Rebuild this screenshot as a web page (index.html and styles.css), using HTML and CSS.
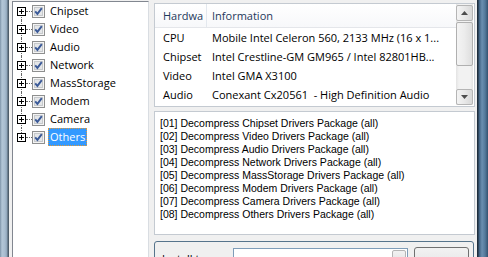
FILE: index.html
```html
<!DOCTYPE html>
<html lang="en">
<head>
    <meta charset="UTF-8">
    <title>Driver Installer</title>
    <link rel="stylesheet" href="styles.css">
</head>
<body>
    <div class="window">
        <div class="frame frame-left"></div>
        <div class="client">
            <div class="tree">
                <ul class="tree-list">
                    <li class="tree-item first"><span class="expander"></span><span class="check"><svg width="13" height="13" viewBox="0 0 13 13"><rect x="0.5" y="0.5" width="12" height="12" fill="#f4f4f4" stroke="#8e8f8f"/><rect x="2.5" y="2.5" width="8" height="8" fill="#e4e6e8" stroke="#c6c9cc"/><path d="M3.2 6.4 L5.4 8.9 L9.8 3.2" fill="none" stroke="#3b5a98" stroke-width="1.9"/></svg></span><span class="label">Chipset</span></li>
                    <li class="tree-item"><span class="expander"></span><span class="check"><svg width="13" height="13" viewBox="0 0 13 13"><rect x="0.5" y="0.5" width="12" height="12" fill="#f4f4f4" stroke="#8e8f8f"/><rect x="2.5" y="2.5" width="8" height="8" fill="#e4e6e8" stroke="#c6c9cc"/><path d="M3.2 6.4 L5.4 8.9 L9.8 3.2" fill="none" stroke="#3b5a98" stroke-width="1.9"/></svg></span><span class="label">Video</span></li>
                    <li class="tree-item"><span class="expander"></span><span class="check"><svg width="13" height="13" viewBox="0 0 13 13"><rect x="0.5" y="0.5" width="12" height="12" fill="#f4f4f4" stroke="#8e8f8f"/><rect x="2.5" y="2.5" width="8" height="8" fill="#e4e6e8" stroke="#c6c9cc"/><path d="M3.2 6.4 L5.4 8.9 L9.8 3.2" fill="none" stroke="#3b5a98" stroke-width="1.9"/></svg></span><span class="label">Audio</span></li>
                    <li class="tree-item"><span class="expander"></span><span class="check"><svg width="13" height="13" viewBox="0 0 13 13"><rect x="0.5" y="0.5" width="12" height="12" fill="#f4f4f4" stroke="#8e8f8f"/><rect x="2.5" y="2.5" width="8" height="8" fill="#e4e6e8" stroke="#c6c9cc"/><path d="M3.2 6.4 L5.4 8.9 L9.8 3.2" fill="none" stroke="#3b5a98" stroke-width="1.9"/></svg></span><span class="label">Network</span></li>
                    <li class="tree-item"><span class="expander"></span><span class="check"><svg width="13" height="13" viewBox="0 0 13 13"><rect x="0.5" y="0.5" width="12" height="12" fill="#f4f4f4" stroke="#8e8f8f"/><rect x="2.5" y="2.5" width="8" height="8" fill="#e4e6e8" stroke="#c6c9cc"/><path d="M3.2 6.4 L5.4 8.9 L9.8 3.2" fill="none" stroke="#3b5a98" stroke-width="1.9"/></svg></span><span class="label">MassStorage</span></li>
                    <li class="tree-item"><span class="expander"></span><span class="check"><svg width="13" height="13" viewBox="0 0 13 13"><rect x="0.5" y="0.5" width="12" height="12" fill="#f4f4f4" stroke="#8e8f8f"/><rect x="2.5" y="2.5" width="8" height="8" fill="#e4e6e8" stroke="#c6c9cc"/><path d="M3.2 6.4 L5.4 8.9 L9.8 3.2" fill="none" stroke="#3b5a98" stroke-width="1.9"/></svg></span><span class="label">Modem</span></li>
                    <li class="tree-item"><span class="expander"></span><span class="check"><svg width="13" height="13" viewBox="0 0 13 13"><rect x="0.5" y="0.5" width="12" height="12" fill="#f4f4f4" stroke="#8e8f8f"/><rect x="2.5" y="2.5" width="8" height="8" fill="#e4e6e8" stroke="#c6c9cc"/><path d="M3.2 6.4 L5.4 8.9 L9.8 3.2" fill="none" stroke="#3b5a98" stroke-width="1.9"/></svg></span><span class="label">Camera</span></li>
                    <li class="tree-item last"><span class="expander"></span><span class="check"><svg width="13" height="13" viewBox="0 0 13 13"><rect x="0.5" y="0.5" width="12" height="12" fill="#f4f4f4" stroke="#8e8f8f"/><rect x="2.5" y="2.5" width="8" height="8" fill="#e4e6e8" stroke="#c6c9cc"/><path d="M3.2 6.4 L5.4 8.9 L9.8 3.2" fill="none" stroke="#3b5a98" stroke-width="1.9"/></svg></span><span class="label selected">Others</span></li>
                </ul>
            </div>

            <div class="main">
                <div class="listview">
                    <div class="lv-body">
                        <div class="lv-header">
                            <div class="col col-hw">Hardwa</div>
                            <div class="col col-info">Information</div>
                        </div>
                        <div class="lv-row">
                            <div class="col col-hw">CPU</div>
                            <div class="col col-info">Mobile Intel Celeron 560, 2133 MHz (16 x 1...</div>
                        </div>
                        <div class="lv-row">
                            <div class="col col-hw">Chipset</div>
                            <div class="col col-info">Intel Crestline-GM GM965 / Intel 82801HB...</div>
                        </div>
                        <div class="lv-row">
                            <div class="col col-hw">Video</div>
                            <div class="col col-info">Intel GMA X3100</div>
                        </div>
                        <div class="lv-row">
                            <div class="col col-hw">Audio</div>
                            <div class="col col-info">Conexant Cx20561&nbsp; - High Definition Audio</div>
                        </div>
                    </div>
                    <div class="scrollbar">
                        <div class="sb-btn sb-up"><svg width="7" height="4" viewBox="0 0 7 4"><path d="M0 4 L3.5 0 L7 4 Z" fill="#4d4d4d"/></svg></div>
                        <div class="sb-thumb"></div>
                        <div class="sb-track"></div>
                        <div class="sb-btn sb-down"><svg width="7" height="4" viewBox="0 0 7 4"><path d="M0 0 L3.5 4 L7 0 Z" fill="#4d4d4d"/></svg></div>
                    </div>
                </div>

                <div class="log">
                    <div class="log-line">[01] Decompress Chipset Drivers Package (all)</div>
                    <div class="log-line">[02] Decompress Video Drivers Package (all)</div>
                    <div class="log-line">[03] Decompress Audio Drivers Package (all)</div>
                    <div class="log-line">[04] Decompress Network Drivers Package (all)</div>
                    <div class="log-line">[05] Decompress MassStorage Drivers Package (all)</div>
                    <div class="log-line">[06] Decompress Modem Drivers Package (all)</div>
                    <div class="log-line">[07] Decompress Camera Drivers Package (all)</div>
                    <div class="log-line">[08] Decompress Others Drivers Package (all)</div>
                </div>

                <div class="install">
                    <div class="install-label">Install to</div>
                    <div class="combo">
                        <span class="combo-text">C:\Drivers</span>
                        <span class="combo-btn"></span>
                    </div>
                    <div class="button">Start(S)</div>
                </div>
            </div>
        </div>
        <div class="frame frame-right"></div>
    </div>
</body>
</html>
```

FILE: styles.css
```css
body {
    margin: 0;
    width: 488px;
    height: 257px;
    overflow: hidden;
    font-family: "Open Sans", "Noto Sans", sans-serif;
    font-size: 11px;
    color: #000;
}

.window {
    display: flex;
    height: 257px;
}

.frame-left {
    width: 9px;
    background: linear-gradient(to right, #7d93a8 0, #b3c6d7 2px, #a8bccf 5px, #8ea4b9 7px, #4e5d6b 8px, #4e5d6b 9px);
}

.frame-right {
    width: 11px;
    background: linear-gradient(to right, #1f2e3d 0, #1f2e3d 1px, #3d5f7f 2px, #6b8fb0 5px, #557a9c 8px, #34526f 11px);
}

.client {
    flex: 1;
    display: flex;
    align-items: flex-start;
    background: #f0f0f0;
    padding: 1px 2px 0 3px;
}

/* tree */

.tree {
    flex-shrink: 0;
    width: 137px;
    height: 280px;
    box-sizing: border-box;
    background: #fff;
    border: 1px solid #828790;
    border-right-color: #d9dde2;
}

.tree-list {
    list-style: none;
    margin: 0;
    padding: 0;
}

.tree-item {
    position: relative;
    display: flex;
    align-items: center;
    height: 18px;
}

.tree-item::before {
    content: "";
    position: absolute;
    left: 8px;
    top: 0;
    bottom: 0;
    border-left: 1px dotted #666;
}

.tree-item.first::before {
    top: 9px;
}

.tree-item.last::before {
    bottom: 9px;
}

.expander {
    position: relative;
    z-index: 1;
    width: 9px;
    height: 9px;
    box-sizing: border-box;
    margin-left: 4px;
    border: 1px solid #000;
    background: #fff;
}

.expander::before {
    content: "";
    position: absolute;
    left: 1px;
    top: 3px;
    width: 5px;
    height: 1px;
    background: #000;
}

.expander::after {
    content: "";
    position: absolute;
    left: 3px;
    top: 1px;
    width: 1px;
    height: 5px;
    background: #000;
}

.check {
    position: relative;
    display: flex;
    margin-left: 6px;
}

.check::before {
    content: "";
    position: absolute;
    left: -6px;
    top: 6px;
    width: 6px;
    border-top: 1px dotted #666;
}

.label {
    margin-left: 3px;
    padding: 0 2px;
    line-height: 18px;
    height: 18px;
    box-sizing: border-box;
}

.selected {
    background: #3399ff;
    color: #fff;
    outline: 1px dotted #e09a3a;
    outline-offset: -1px;
}

/* right column */

.main {
    flex-shrink: 0;
    margin-left: 5px;
    width: 321px;
    display: flex;
    flex-direction: column;
}

.listview {
    flex-shrink: 0;
    display: flex;
    height: 104px;
    margin-top: 2px;
    box-sizing: border-box;
    border: 1px solid #c4cad1;
    background: #fff;
    padding: 0 1px 1px 0;
}

.lv-body {
    flex: 1;
    overflow: hidden;
}

.lv-header {
    display: flex;
    height: 23px;
    align-items: center;
    background: linear-gradient(#ffffff, #f7f8fa);
    border-bottom: 1px solid #e4e6ea;
    color: #1e395b;
}

.lv-header .col-hw {
    border-right: 1px solid #e3e8ee;
    height: 23px;
    line-height: 23px;
}

.lv-row {
    display: flex;
    height: 19px;
    align-items: center;
}

.col {
    white-space: nowrap;
    overflow: hidden;
}

.col-hw {
    width: 52px;
    box-sizing: border-box;
    padding-left: 8px;
}

.col-info {
    flex: 1;
    padding-left: 5px;
}

.scrollbar {
    width: 17px;
    display: flex;
    flex-direction: column;
    padding-top: 1px;
    background: linear-gradient(to right, #e3e3e3, #f2f2f2 3px, #f2f2f2 14px, #e3e3e3);
}

.sb-btn {
    height: 16px;
    box-sizing: border-box;
    border: 1px solid #b5b5b5;
    border-radius: 2px;
    background: linear-gradient(to right, #f4f4f4, #e8e8e8 50%, #d8d8d8);
    display: flex;
    align-items: center;
    justify-content: center;
}

.sb-thumb {
    height: 44px;
    box-sizing: border-box;
    margin-top: 1px;
    border: 1px solid #b0b0b0;
    border-radius: 2px;
    background: linear-gradient(to right, #f4f4f4, #ececec 50%, #dedede);
}

.sb-track {
    flex: 1;
}

.log {
    flex-shrink: 0;
    margin-top: 4px;
    height: 124px;
    box-sizing: border-box;
    border: 1px solid #c4cad1;
    background: #fff;
    padding: 5px 0 0 5px;
    font-family: "Liberation Sans", Arial, sans-serif;
    font-size: 10.5px;
}

.log-line {
    height: 13px;
    line-height: 13px;
    white-space: nowrap;
}

.install {
    flex-shrink: 0;
    margin-top: 6px;
    height: 40px;
    width: 320px;
    box-sizing: border-box;
    border: 1px solid #56748c;
    border-radius: 3px;
    display: flex;
    align-items: flex-start;
    padding: 5px 0 0 7px;
}

.install-label {
    width: 71px;
    margin-top: 4px;
    line-height: 15px;
}

.combo {
    width: 175px;
    height: 22px;
    box-sizing: border-box;
    margin-top: 1px;
    border: 1px solid #7f9db9;
    background: #fff;
    display: flex;
    padding: 1px;
}

.combo-text {
    flex: 1;
    padding: 3px 0 0 2px;
    line-height: 15px;
}

.combo-btn {
    width: 14px;
    border: 1px solid #b5b5b5;
    border-radius: 2px;
    box-sizing: border-box;
    background: linear-gradient(#f2f2f2, #dcdcdc);
}

.button {
    width: 55px;
    height: 23px;
    box-sizing: border-box;
    margin-left: 6px;
    border: 1px solid #707070;
    border-radius: 3px;
    background: linear-gradient(#f2f2f2 0, #ebebeb 50%, #dddddd 51%, #cfcfcf 100%);
    text-align: center;
    line-height: 20px;
    padding-top: 3px;
}
```
